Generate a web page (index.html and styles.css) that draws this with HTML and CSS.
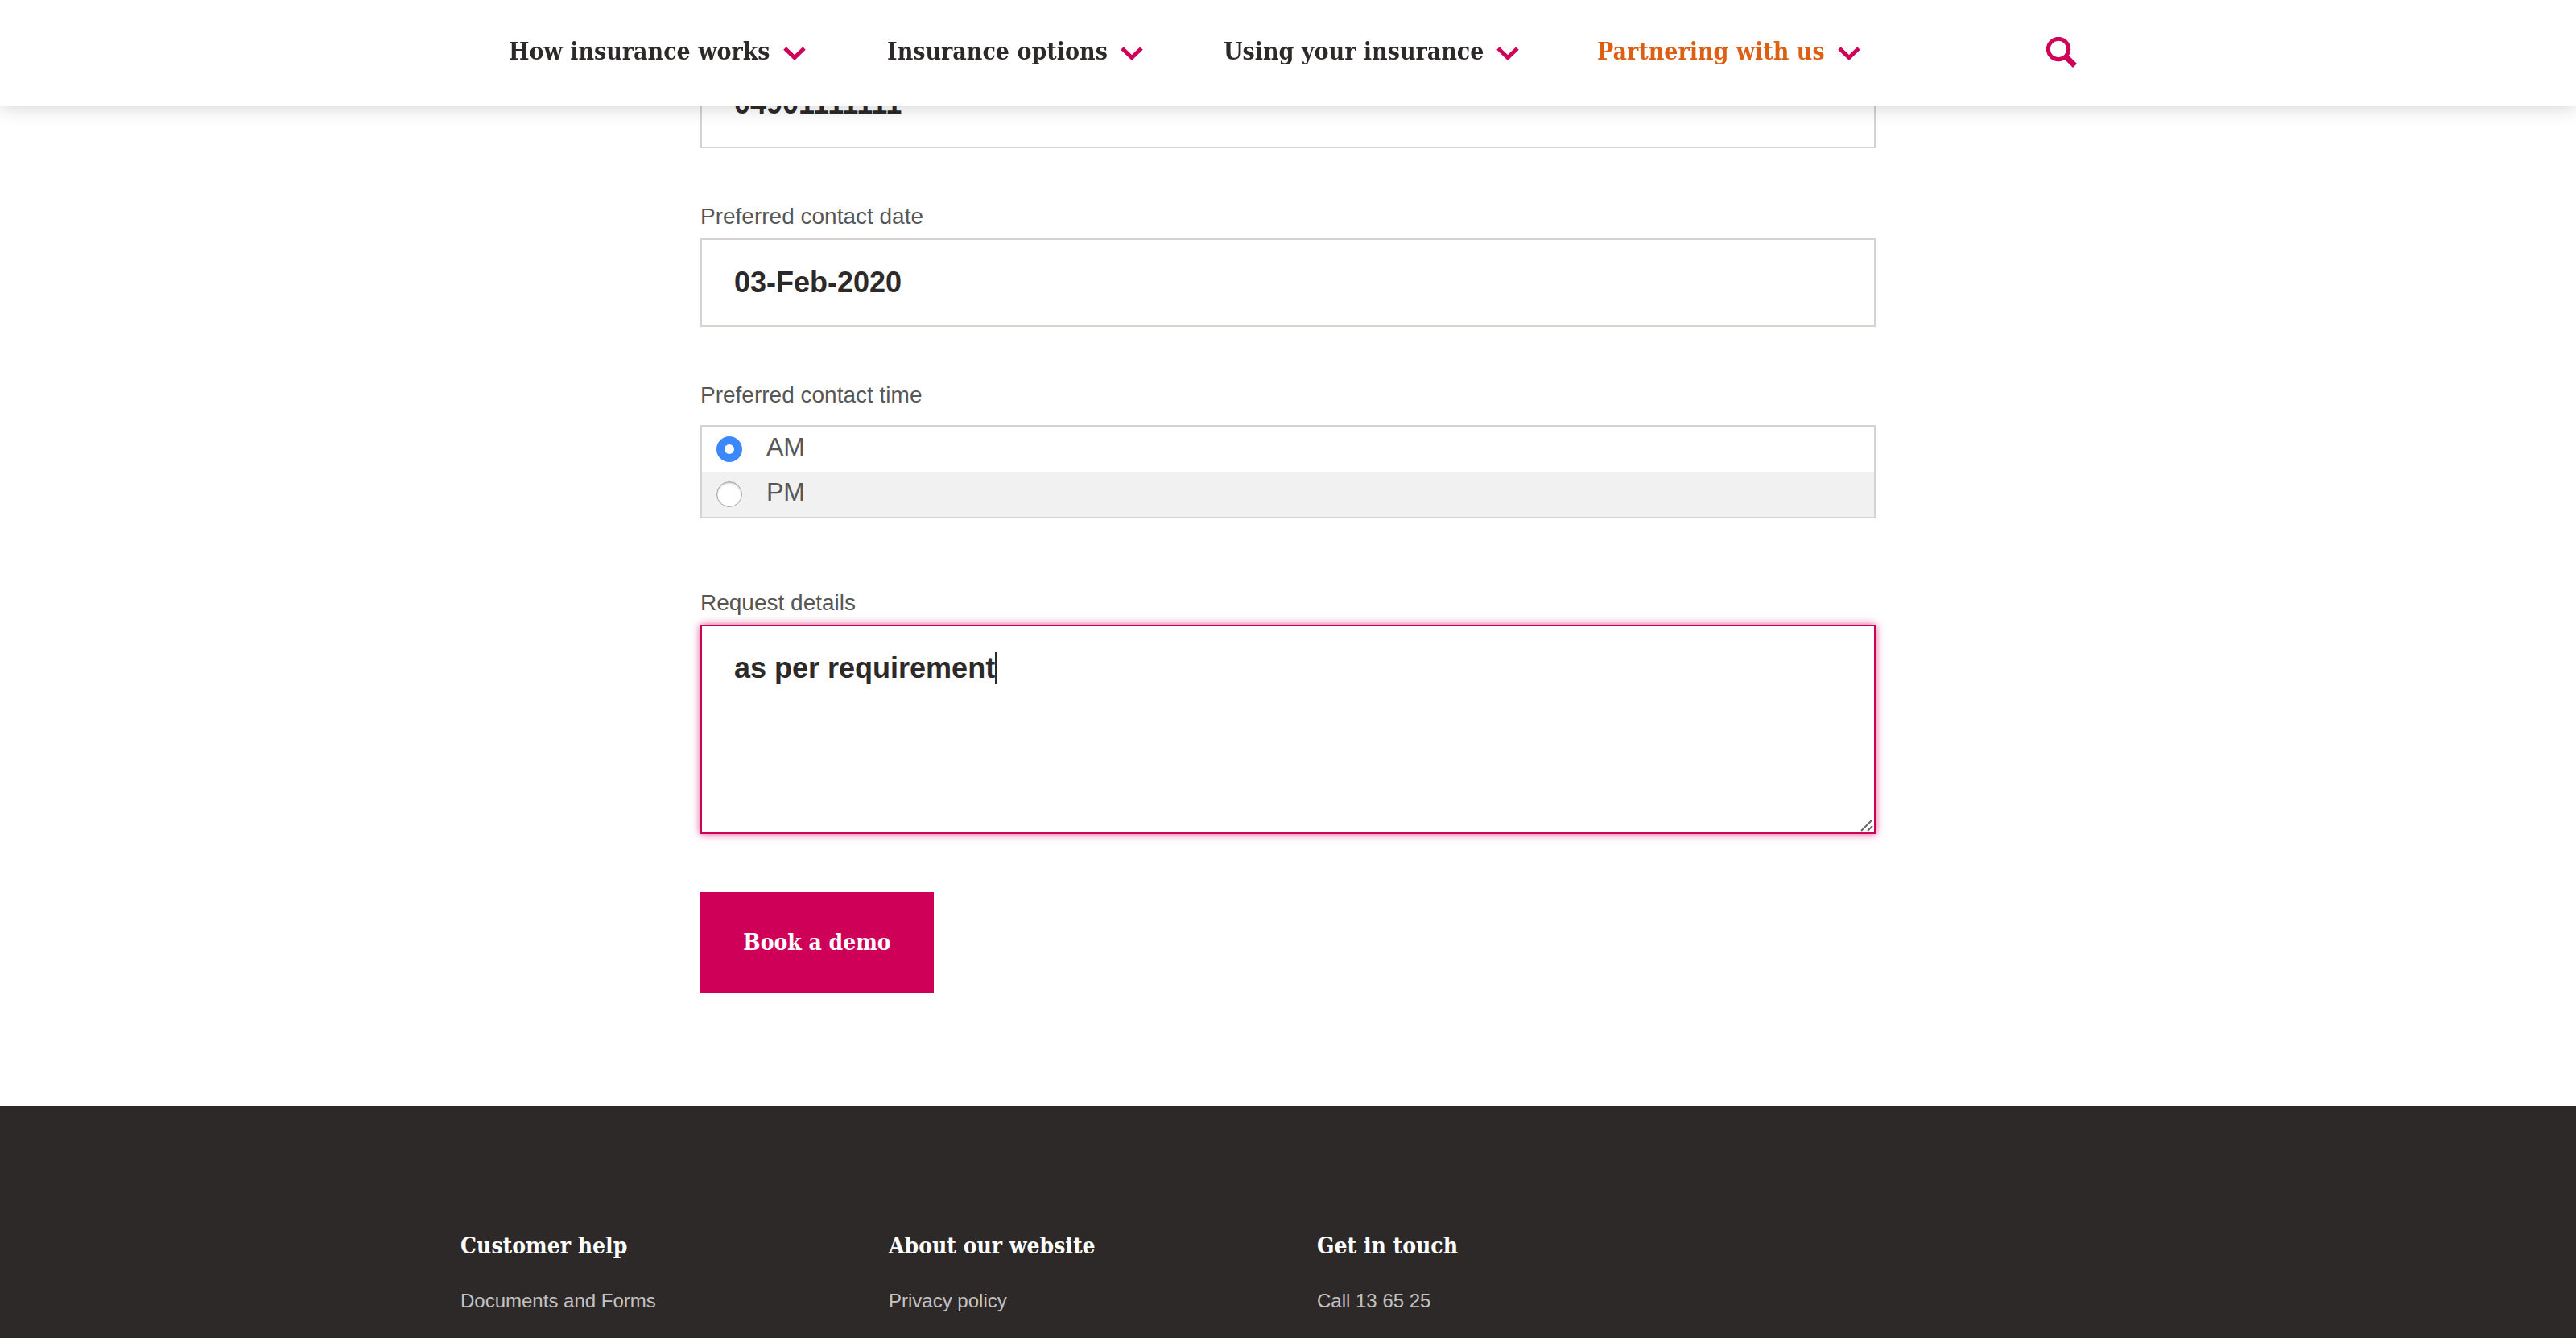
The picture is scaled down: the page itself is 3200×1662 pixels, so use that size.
FILE: index.html
```html
<!DOCTYPE html>
<html lang="en">
<head>
<meta charset="utf-8">
<meta name="viewport" content="width=device-width, initial-scale=1">
<title>Book a demo</title>
<link rel="stylesheet" href="styles.css">
</head>
<body>
<header class="site-header">
  <nav class="nav" aria-label="Main">
    <a class="nav-link" href="#works">How insurance works
      <svg class="chevron" viewBox="0 0 28 17" aria-hidden="true"><path d="M2 2L14 13.500L26 2"/></svg></a>
    <a class="nav-link" href="#options">Insurance options
      <svg class="chevron" viewBox="0 0 28 17" aria-hidden="true"><path d="M2 2L14 13.500L26 2"/></svg></a>
    <a class="nav-link" href="#using">Using your insurance
      <svg class="chevron" viewBox="0 0 28 17" aria-hidden="true"><path d="M2 2L14 13.500L26 2"/></svg></a>
    <a class="nav-link nav-link-active" href="#partnering">Partnering with us
      <svg class="chevron" viewBox="0 0 28 17" aria-hidden="true"><path d="M2 2L14 13.500L26 2"/></svg></a>
    <button class="search" type="button" aria-label="Search">
      <svg class="search-icon" viewBox="0 0 38 38" aria-hidden="true"><circle cx="15" cy="15" r="12.700"/><path d="M24 24L35.500 35.500"/></svg>
    </button>
  </nav>
</header>

<main>
  <form class="form">
    <div class="field">
      <input class="input" id="phone" type="tel" value="04901111111" aria-label="Phone number">
    </div>
    <div class="field">
      <label class="label" for="date">Preferred contact date</label>
      <input class="input" id="date" type="text" value="03-Feb-2020">
    </div>
    <fieldset class="field field-options">
      <legend class="label">Preferred contact time</legend>
      <div class="options">
        <label class="option"><input class="radio" type="radio" name="time" checked><span>AM</span></label>
        <label class="option"><input class="radio" type="radio" name="time"><span>PM</span></label>
      </div>
    </fieldset>
    <div class="field field-details">
      <label class="label" for="details">Request details</label>
      <div class="textarea-wrap">
        <textarea class="input textarea" id="details">as per requirement</textarea>
        <span class="caret"></span>
        <svg class="grip" viewBox="0 0 16 16" aria-hidden="true"><path d="M1 15L15 1M9 15L15 9"/></svg>
      </div>
    </div>
    <button class="submit" type="submit">Book a demo</button>
  </form>
</main>

<footer class="footer">
  <div class="footer-columns">
    <section>
      <h2 class="footer-title">Customer help</h2>
      <a class="footer-link" href="#documents">Documents and Forms</a>
    </section>
    <section>
      <h2 class="footer-title">About our website</h2>
      <a class="footer-link" href="#privacy">Privacy policy</a>
    </section>
    <section>
      <h2 class="footer-title">Get in touch</h2>
      <a class="footer-link" href="tel:136525">Call 13 65 25</a>
    </section>
  </div>
</footer>
</body>
</html>
```
FILE: styles.css
```css
:root {
  --pink: #cf0058;
  --ink: #2d2928;
  --grey: #575757;
  --line: #d7d2cb;
  --slab: "DejaVu Serif Condensed", "DejaVu Serif", serif;
}

* { box-sizing: border-box; }

body {
  margin: 0;
  background: #fff;
  color: var(--ink);
  font-family: "Liberation Sans", Arial, sans-serif;
}

.site-header {
  position: fixed;
  top: 0;
  left: 0;
  right: 0;
  z-index: 1;
  background: #fff;
  box-shadow: 0 0 24px rgba(0, 0, 0, 0.2);
}

.nav {
  display: grid;
  grid-template-columns: 470px 418px 464px 558px auto;
  justify-content: start;
  align-items: center;
  max-width: 2056px;
  height: 132px;
  margin: 0 auto;
  padding: 0 60px 4px;
}

.nav-link {
  display: flex;
  align-items: center;
  gap: 16px;
  color: var(--ink);
  font: bold 30px/40px var(--slab);
  text-decoration: none;
  white-space: nowrap;
}

.nav-link-active { color: #dc5f13; }

.chevron {
  width: 28px;
  height: 17px;
  margin-top: 4px;
  fill: none;
  stroke: var(--pink);
  stroke-width: 5;
}

.search {
  padding: 2px 0 0;
  border: 0;
  background: none;
}

.search-icon {
  display: block;
  width: 38px;
  height: 38px;
  fill: none;
  stroke: var(--pink);
  stroke-width: 5;
}

.search-icon path { stroke-width: 7; }

.form {
  max-width: 1460px;
  margin: 0 auto;
  padding: 74px 0 140px;
}

.field {
  margin: 0 0 68px;
  padding: 0;
  border: 0;
}

.field-options { margin-bottom: 88px; }

.field-details { margin-bottom: 72px; }

.label {
  display: block;
  margin-bottom: 10px;
  padding: 0;
  color: var(--grey);
  font-size: 28px;
  line-height: 34px;
}

.input {
  display: block;
  width: 100%;
  height: 110px;
  padding: 0 40px;
  border: 2px solid var(--line);
  border-radius: 0;
  outline: 0;
  background: #fff;
  color: var(--ink);
  font: bold 36px/44px "Liberation Sans", Arial, sans-serif;
}

.options {
  margin-top: 20px;
  border: 2px solid var(--line);
}

.field-options .label { margin-bottom: 0; }

.option {
  display: flex;
  gap: 30px;
  height: 56px;
  padding: 0 18px;
  color: var(--grey);
  font-size: 32px;
  line-height: 50px;
}

.option:nth-child(even) { background: #f1f1f1; }

.radio {
  appearance: none;
  width: 32px;
  height: 32px;
  margin: 12px 0 0;
  border: 1px solid #a6a6a6;
  border-radius: 50%;
  background: #fff;
  box-shadow: inset 0 1px 2px rgba(0, 0, 0, 0.3);
}

.radio:checked {
  border: 10px solid #3b88fd;
  box-shadow: none;
}

.textarea-wrap { position: relative; }

.textarea {
  height: 260px;
  padding: 30px 40px;
  border-color: var(--pink);
  box-shadow: 0 0 10px rgba(207, 0, 88, 0.7);
  resize: none;
}

.caret {
  position: absolute;
  top: 34px;
  left: 366px;
  width: 2px;
  height: 40px;
  background: var(--ink);
}

.grip {
  position: absolute;
  right: 3px;
  bottom: 3px;
  width: 16px;
  height: 16px;
  stroke: #666;
  stroke-width: 2;
}

.submit {
  display: block;
  min-width: 290px;
  height: 126px;
  padding: 0 40px;
  border: 0;
  background: var(--pink);
  color: #fff;
  font: bold 28px/40px var(--slab);
}

.footer {
  padding: 156px 0 30px;
  background: var(--ink);
}

.footer-columns {
  display: grid;
  grid-template-columns: repeat(4, 1fr);
  column-gap: 72px;
  max-width: 2056px;
  margin: 0 auto;
}

.footer-title {
  margin: 0 0 34px;
  color: #fff;
  font: bold 28px/36px var(--slab);
}

.footer-link {
  display: block;
  color: #c4c2c1;
  font-size: 24px;
  line-height: 32px;
  text-decoration: none;
}
```
